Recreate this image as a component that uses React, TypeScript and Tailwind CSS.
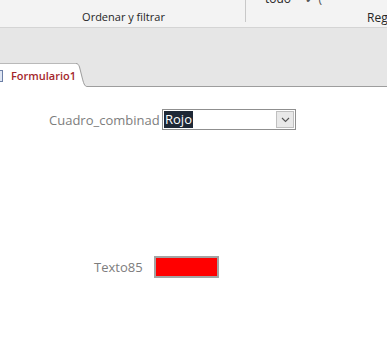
import React from "react";

export default function App() {
  const font = { fontFamily: '"Open Sans", "Noto Sans", "Liberation Sans", sans-serif' };
  return (
    <div className="w-[387px] h-[353px] overflow-hidden bg-white flex flex-col" style={font}>
      {/* Ribbon */}
      <div className="h-[28px] bg-[#f3f3f3] border-b border-[#d4d4d4] flex shrink-0 overflow-hidden">
        <div className="w-[245px] flex flex-col items-center justify-end pb-[3px] pl-[2px]">
          <span className="text-[11px] text-[#262626] leading-[15px]">Ordenar y filtrar</span>
        </div>
        <div className="w-px h-[22px] bg-[#c8c8c8]" />
        <div className="flex-1 relative">
          <div className="absolute left-[19px] top-[-9px] flex items-center gap-[8px] text-[12px] text-[#262626] leading-[16px]">
            <span>todo ·</span>
            <span className="text-[#555]">✔ (</span>
          </div>
          <span className="absolute left-[121px] top-[10px] text-[12px] text-[#262626] leading-[16px]">Reg</span>
        </div>
      </div>
      {/* gray band */}
      <div className="h-[35px] bg-[#e6e6e6] shrink-0" />
      {/* tab strip */}
      <div className="h-[24px] bg-[#e6e6e6] flex shrink-0">
        <div className="w-[76px] bg-white border-t border-[#b9b9b9] flex items-center">
          <div className="w-[5px] h-[12px] ml-[-1px] mr-[8px] border border-[#6c7fa6] bg-[#dfe6f3]" />
          <span className="relative z-10 text-[11px] font-semibold text-[#a4262c] leading-[14px] whitespace-nowrap">Formulario1</span>
        </div>
        <svg width="12" height="24" viewBox="0 0 12 24" className="shrink-0">
          <path d="M0 0 L0 24 L12 24 L12 23.5 L11 23.5 C8.5 23.5 7.5 20 6 14 L3.5 4 C2.5 1.5 1.8 0.5 0 0.5 Z" fill="#ffffff" />
          <path d="M0 0.5 C1.8 0.5 2.5 1.5 3.5 4 L6 14 C7.5 20 8.5 23.5 11 23.5 L12 23.5" fill="none" stroke="#9d9d9d" strokeWidth="1" />
        </svg>
        <div className="flex-1 bg-white relative">
          <div className="absolute left-0 right-0 bottom-0 h-px bg-[#9d9d9d]" />
          <div className="h-[23px] bg-[#e6e6e6]" />
        </div>
      </div>
      {/* body */}
      <div className="flex-1 bg-white flex flex-col">
        <div className="mt-[22px] flex items-center h-[21px]">
          <span className="ml-[49px] w-[113px] text-[13px] text-[#7d7d7d] leading-[16px] whitespace-nowrap overflow-hidden">Cuadro_combinad</span>
          <div className="w-[134px] h-[21px] border border-[#8f8f8f] bg-white flex items-center">
            <span className="ml-[1px] h-[17px] px-[1px] bg-[#1e2836] text-white text-[13px] leading-[17px]">Rojo</span>
            <div className="flex-1" />
            <div className="w-[18px] h-[17px] mr-[1px] bg-[#e9e9e9] border border-[#c0c0c0] flex items-center justify-center">
              <svg width="9" height="6" viewBox="0 0 9 6">
                <path d="M1 1 L4.5 4.5 L8 1" fill="none" stroke="#555" strokeWidth="1.1" />
              </svg>
            </div>
          </div>
        </div>
        <div className="mt-[126px] flex items-center h-[21px]">
          <span className="ml-[94px] w-[60px] text-[13px] text-[#7d7d7d] leading-[16px]">Texto85</span>
          <div className="w-[65px] h-[22px] bg-[#ff0000] border-2 border-[#a3a3a3]" />
        </div>
      </div>
    </div>
  );
}
